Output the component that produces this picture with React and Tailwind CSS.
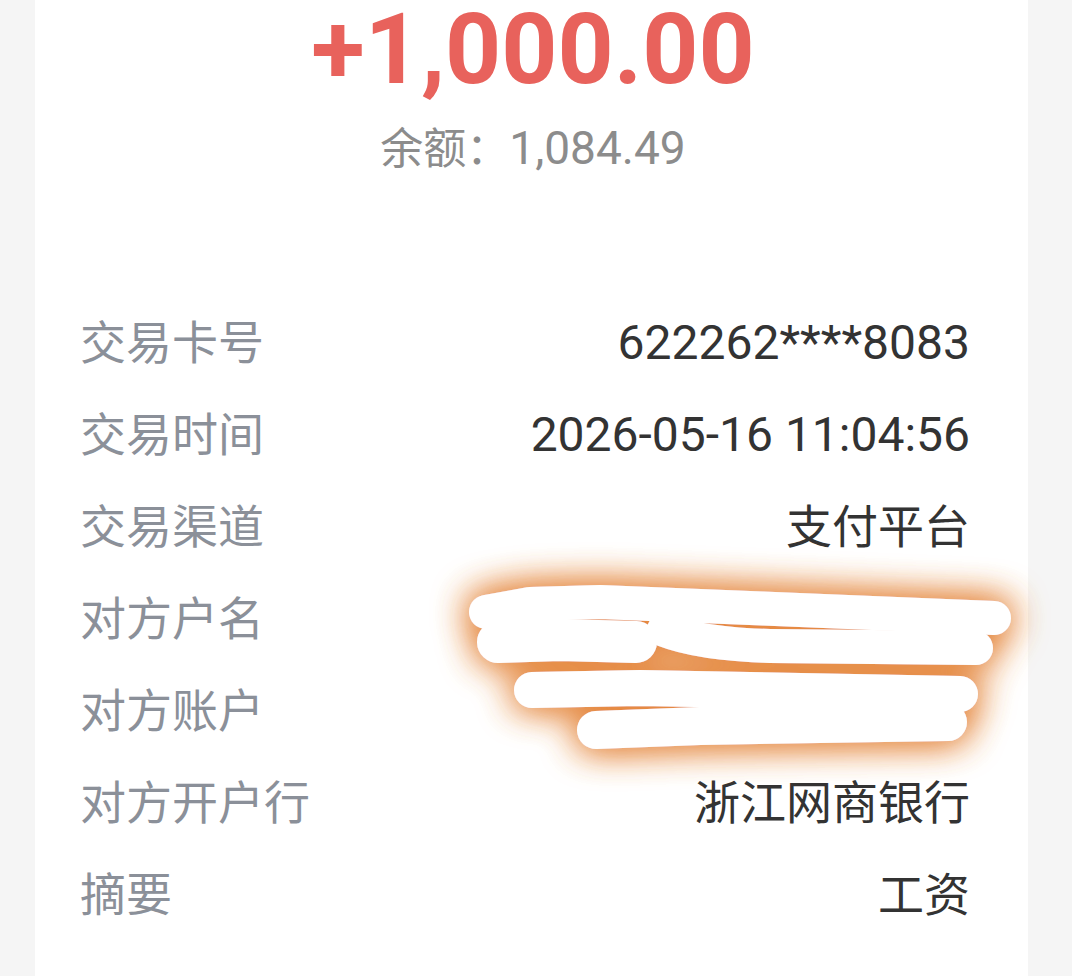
import React from "react";

const rows = [
  { label: "交易卡号", value: "622262****8083", num: true },
  { label: "交易时间", value: "2026-05-16 11:04:56", num: true },
  { label: "交易渠道", value: "支付平台" },
  { label: "对方户名", value: "" },
  { label: "对方账户", value: "" },
  { label: "对方开户行", value: "浙江网商银行" },
  { label: "摘要", value: "工资" },
];

function Scribble() {
  // redaction marks over the counterparty rows
  return (
    <svg
      className="absolute left-0 top-0 pointer-events-none"
      width="1072"
      height="976"
      viewBox="0 0 1072 976"
    >
      <defs>
        <filter id="glow" x="-20%" y="-60%" width="140%" height="220%">
          <feGaussianBlur in="SourceAlpha" stdDeviation="18" result="b" />
          <feFlood floodColor="#e58a43" floodOpacity="1" />
          <feComposite in2="b" operator="in" result="g" />
          <feMerge>
            <feMergeNode in="g" />
            <feMergeNode in="g" />
            <feMergeNode in="SourceGraphic" />
          </feMerge>
        </filter>
      </defs>
      <g
        filter="url(#glow)"
        fill="none"
        stroke="#ffffff"
        strokeLinecap="round"
        strokeLinejoin="round"
      >
        <path d="M486 612 L530 604 L600 602 L700 606 L994 618" strokeWidth="34" />
        <path d="M498 642 L560 640 L636 642" strokeWidth="42" />
        <path d="M664 630 Q700 644 770 646 L976 648" strokeWidth="34" />
        <path d="M532 690 L640 688 L960 694" strokeWidth="36" />
        <path d="M596 730 L700 726 L948 722" strokeWidth="38" />
      </g>
    </svg>
  );
}

export default function App() {
  return (
    <div
      className="relative w-[1072px] h-[976px] overflow-hidden bg-[#f5f5f5] pl-[35px] pr-[44px]"
      style={{ fontFamily: "Roboto, 'Noto Sans CJK SC', sans-serif" }}
    >
      <div className="h-full bg-white pl-[45px] pr-[58px]">
        <div className="flex flex-col items-center pl-[16px]">
          <div className="mt-[2px] text-[98px] leading-[96px] font-bold text-[#e8625c]">
            +1,000.00
          </div>
          <div className="mt-[28px] flex items-baseline leading-[44px] text-[#8c8c8c]">
            <span className="text-[43px]">余额：</span>
            <span className="text-[46px]">1,084.49</span>
          </div>
        </div>
        <div className="mt-[126px] flex flex-col">
          {rows.map((r) => (
            <div key={r.label} className="h-[92px] flex items-center justify-between">
              <span className="text-[46px] text-[#8b9099]">{r.label}</span>
              <span
                className={
                  r.num ? "text-[48px] text-[#333333]" : "text-[46px] text-[#333333]"
                }
              >
                {r.value}
              </span>
            </div>
          ))}
        </div>
      </div>
      <Scribble />
    </div>
  );
}
